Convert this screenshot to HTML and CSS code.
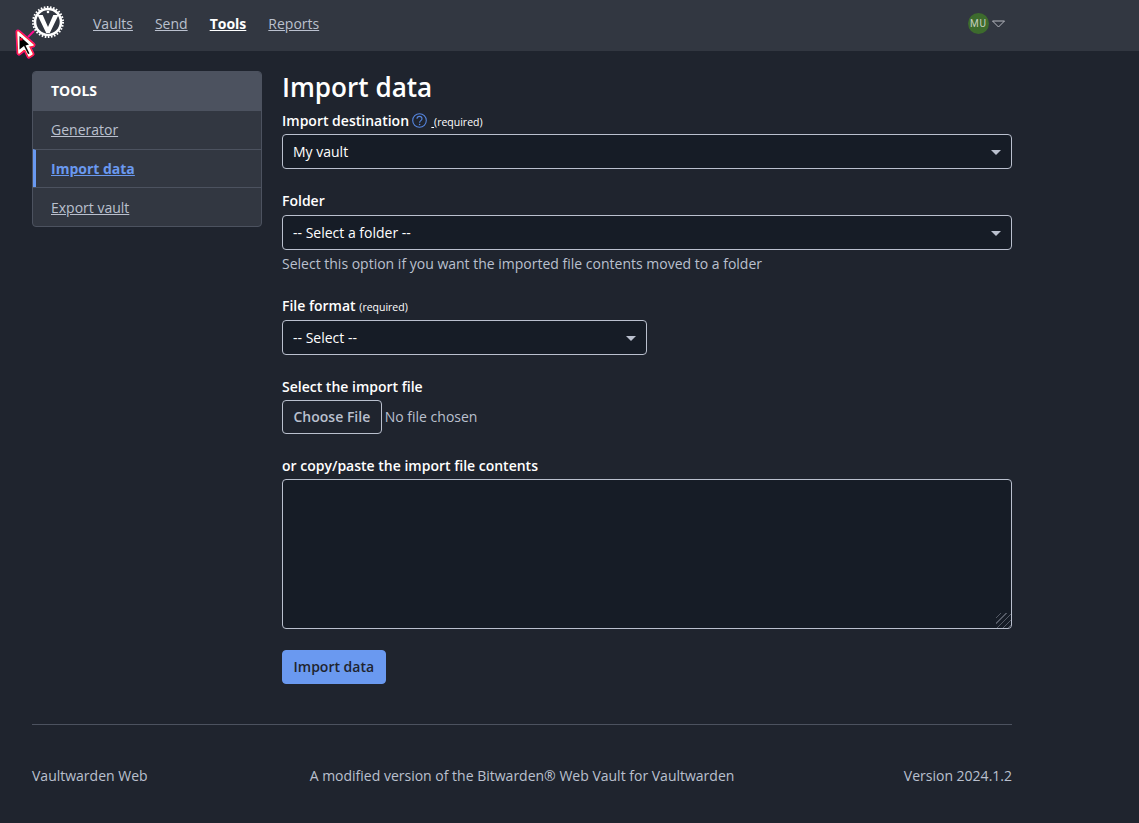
FILE: index.html
```html
<!DOCTYPE html>
<html lang="en">
<head>
    <meta charset="UTF-8">
    <title>Import data | Vaultwarden Web</title>
    <link rel="stylesheet" href="styles.css">
</head>
<body>
    <nav class="navbar">
        <a class="logo" href="#">
            <svg width="32" height="32" viewBox="0 0 32 32">
                <circle cx="16" cy="16" r="13" fill="none" stroke="#fff" stroke-width="2.600"/>
                <circle cx="16" cy="16" r="15" fill="none" stroke="#fff" stroke-width="2" stroke-dasharray="1.6 1.54"/>
                <path d="M5.500 9h5.200L16 21l5.300-12h5.200L17.800 27h-3.600z" fill="#fff"/>
                <circle cx="16" cy="6" r="1.300" fill="#fff"/>
            </svg>
        </a>
        <a class="nav-link" href="#">Vaults</a>
        <a class="nav-link" href="#">Send</a>
        <a class="nav-link active" href="#">Tools</a>
        <a class="nav-link" href="#">Reports</a>
        <div class="account">
            <span class="avatar">MU</span>
            <svg width="13" height="8" viewBox="0 0 13 8"><path d="M.5 1h12L6.500 7z" fill="none" stroke="#b5b8bf" stroke-width="1"/></svg>
        </div>
    </nav>

    <!-- the recording's mouse pointer sits over the logo -->
    <svg class="pointer" width="26" height="34" viewBox="0 0 26 34">
        <path d="M15 11l6-6" fill="none" stroke="#ff0a8c" stroke-width="2"/>
        <path d="M5 6l15 13-5 1 4 8-3 2-4-8-6 5z" fill="#fff" stroke="#ff0a8c" stroke-width="5" stroke-linejoin="round"/>
        <path d="M5 6l15 13-5 1 4 8-3 2-4-8-6 5z" fill="#fff" stroke="#ff2a2a" stroke-width="3.500" stroke-linejoin="round"/>
        <path d="M5 6l15 13-5 1 4 8-3 2-4-8-6 5z" fill="#fff" stroke="#fff" stroke-width="1.500" stroke-linejoin="round"/>
        <path d="M6.500 10l9.500 8.500-3.500 1 4 8-1.500.5-4-8-4.500 3.500z" fill="#000"/>
        <path d="M7 12h2.500v2.500H7z" fill="#e4002b"/>
    </svg>

    <div class="page">
        <div class="content">
            <aside class="sidebar">
                <div class="side-title">TOOLS</div>
                <a class="side-item" href="#">Generator</a>
                <a class="side-item current" href="#">Import data</a>
                <a class="side-item" href="#">Export vault</a>
            </aside>

            <main class="main">
                <h1>Import data</h1>

                <div class="field first">
                    <label class="label tight">Import destination
                        <svg class="help" width="15" height="15" viewBox="0 0 15 15">
                            <circle cx="7.500" cy="7.500" r="6.800" fill="none" stroke="#5585de" stroke-width="1.100"/>
                            <path d="M5 5.800c0-3.200 5-3.200 5 0 0 1.900-2.400 1.900-2.400 3.900" fill="none" stroke="#5585de" stroke-width="1.100"/>
                            <circle cx="7.600" cy="11.500" r=".8" fill="#5585de"/>
                        </svg>
                        <small class="required"><u>&nbsp;</u>(required)</small>
                    </label>
                    <div class="select-wrap">
                        <select class="control"><option>My vault</option></select>
                    </div>
                </div>

                <div class="field">
                    <label class="label">Folder</label>
                    <div class="select-wrap">
                        <select class="control"><option>-- Select a folder --</option></select>
                    </div>
                    <p class="hint">Select this option if you want the imported file contents moved to a folder</p>
                </div>

                <div class="field half">
                    <label class="label">File format <small class="required">(required)</small></label>
                    <div class="select-wrap">
                        <select class="control"><option>-- Select --</option></select>
                    </div>
                </div>

                <div class="field">
                    <label class="label tight">Select the import file</label>
                    <input class="file-input" type="file">
                </div>

                <div class="field">
                    <label class="label tight">or copy/paste the import file contents</label>
                    <textarea class="control paste"></textarea>
                </div>

                <button class="btn-primary">Import data</button>
            </main>
        </div>

        <footer class="footer">
            <span>Vaultwarden Web</span>
            <span>A modified version of the Bitwarden® Web Vault for Vaultwarden</span>
            <span class="version">Version 2024.1.2</span>
        </footer>
    </div>
</body>
</html>
```

FILE: styles.css
```css
* {
    box-sizing: border-box;
}

body {
    margin: 0;
    font-family: "Open Sans", sans-serif;
    font-size: 14px;
    background-color: #1f242e;
    color: #fff;
}

.navbar {
    display: flex;
    align-items: center;
    height: 51px;
    padding: 0 134px 0 32px;
    background-color: #323741;
}

.logo {
    display: flex;
    margin-right: 7px;
    margin-top: -7px;
}

.nav-link {
    margin: -5px 0 0 22px;
    color: #bac0ce;
    text-decoration: underline;
}

.nav-link.active {
    color: #fff;
    font-weight: 700;
}

.account {
    display: flex;
    align-items: center;
    gap: 3px;
    margin-left: auto;
    margin-top: -4px;
}

.avatar {
    display: flex;
    align-items: center;
    justify-content: center;
    width: 21px;
    height: 21px;
    border-radius: 50%;
    background-color: #3d6b2d;
    color: #c4cdbf;
    font-family: "Roboto", sans-serif;
    font-size: 10px;
    letter-spacing: 1px;
}

.pointer {
    position: absolute;
    left: 13px;
    top: 26px;
}

.page {
    width: 980px;
    margin-left: 32px;
}

.content {
    display: flex;
    gap: 20px;
    padding-top: 20px;
}

.sidebar {
    flex: 0 0 230px;
    align-self: flex-start;
    background-color: #323741;
    border: 1px solid #4c525f;
    border-radius: 4px;
    overflow: hidden;
}

.side-title {
    height: 38px;
    padding: 0 18px;
    line-height: 38px;
    font-weight: 700;
    background-color: #4c525f;
}

.side-item {
    display: block;
    height: 38.67px;
    padding: 0.33px 18px 0;
    line-height: 37px;
    color: #bac0ce;
    border-top: 1px solid #4c525f;
}

.side-item.current {
    color: #6a99f0;
    font-weight: 700;
    padding-left: 15px;
    border-left: 3px solid #6a99f0;
}

.main {
    flex: 1;
}

h1 {
    margin: 0 0 7px;
    font-size: 26.100px;
    font-weight: 600;
    line-height: 33px;
}

.field {
    margin-top: 22px;
}

.field.first {
    margin-top: 0;
}

.field.half {
    width: 365px;
}

.label {
    display: block;
    margin-bottom: 4px;
    font-weight: 600;
    line-height: 20px;
}

.label.tight {
    margin-bottom: 3px;
}

.required {
    font-size: 10.500px;
    font-weight: 400;
    line-height: 1;
}

.help {
    vertical-align: -2px;
    margin: 0 1px 0 -1px;
}

.select-wrap {
    position: relative;
}

.select-wrap::after {
    content: "";
    position: absolute;
    right: 11px;
    top: 16px;
    border-left: 5px solid transparent;
    border-right: 5px solid transparent;
    border-top: 5px solid #bac0ce;
}

.control {
    display: block;
    width: 100%;
    height: 35px;
    padding: 0 10px;
    font-family: inherit;
    font-size: 14px;
    color: #fff;
    background-color: #161c26;
    border: 1px solid #bac0ce;
    border-radius: 4px;
    appearance: none;
}

.paste {
    height: 150px;
    resize: vertical;
}

.paste::-webkit-resizer {
    background: repeating-linear-gradient(135deg, transparent 0 3px, #555a66 3px 4px);
}

.hint {
    margin: 4px 0 0;
    color: #bac0ce;
    line-height: 20px;
}

.file-input {
    display: block;
    font-family: inherit;
    font-size: 14px;
    color: #bac0ce;
}

.file-input::file-selector-button {
    height: 34px;
    padding: 0 10.500px 2px;
    margin-right: 3px;
    font-family: inherit;
    font-size: 14px;
    font-weight: 600;
    color: #bac0ce;
    background-color: transparent;
    border: 1px solid #bac0ce;
    border-radius: 4px;
}

.btn-primary {
    display: block;
    height: 34px;
    margin-top: 21px;
    padding: 0 10.500px 2px;
    font-family: inherit;
    font-size: 14px;
    font-weight: 600;
    color: #1f242e;
    background-color: #6a99f0;
    border: 1px solid #6a99f0;
    border-radius: 4px;
}

.footer {
    display: grid;
    grid-template-columns: 1fr auto 1fr;
    margin-top: 40px;
    padding-top: 41px;
    border-top: 1px solid #4c525f;
    color: #bac0ce;
    line-height: 20px;
}

.version {
    text-align: right;
}
```
